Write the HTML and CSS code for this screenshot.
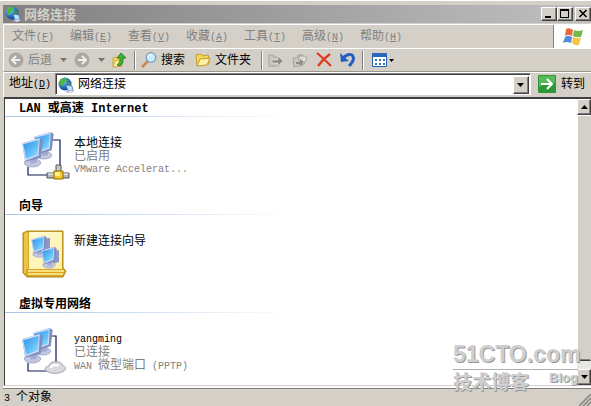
FILE: index.html
```html
<!DOCTYPE html>
<html lang="zh-CN">
<head>
    <meta charset="UTF-8">
    <meta name="viewport" content="width=device-width, initial-scale=1.0">
    <title>网络连接</title>
    <link rel="stylesheet" href="styles.css">
</head>

<body>
    <!-- shared drawings -->
    <svg class="defs" width="0" height="0">
        <defs>
            <radialGradient id="globeFill" cx="35%" cy="30%" r="75%">
                <stop offset="0" stop-color="#9fdcf5"/>
                <stop offset="0.5" stop-color="#2f7fd0"/>
                <stop offset="1" stop-color="#123c86"/>
            </radialGradient>
            <linearGradient id="screenFill" x1="0" y1="0" x2="1" y2="1">
                <stop offset="0" stop-color="#2f8fe8"/>
                <stop offset="0.6" stop-color="#62c0f8"/>
                <stop offset="1" stop-color="#a8e6ff"/>
            </linearGradient>
            <linearGradient id="bookFill" x1="0" y1="0" x2="1" y2="1">
                <stop offset="0" stop-color="#fffbd6"/>
                <stop offset="1" stop-color="#fdf0a4"/>
            </linearGradient>
            <symbol id="globe" viewBox="0 0 16 16">
                <circle cx="7" cy="7" r="6.5" fill="url(#globeFill)"/>
                <path d="M2 3 Q5 0 8 1 L9 4 L6 6 L5 9 L2 8 Z" fill="#52b443"/>
                <path d="M9 6 L12 5 L13 8 L10 10 Z" fill="#3c9a3c"/>
                <path d="M8 8 L14 9 L15 13 L10 14 Z" fill="#b9e4fb" stroke="#4d78b5" stroke-width="0.8"/>
                <path d="M8 15 L13 13 L16 14 L12 16 Z" fill="#e6ebf5" stroke="#8492b0" stroke-width="0.5"/>
            </symbol>
            <symbol id="monitor" viewBox="0 0 22 30">
                <ellipse cx="11" cy="25" rx="8" ry="4" fill="#c3c8e2" stroke="#9299bd" stroke-width="0.7"/>
                <path d="M9 19 L16 18 L15 25 L9 26 Z" fill="#a4abd0"/>
                <path d="M1 6 L18 1 L21 3 L19 20 L4 24 Z" fill="#7d8fc0"/>
                <path d="M1 6 L18 1 L17 18 L4 23 Z" fill="#cfdcf6"/>
                <path d="M2 7 L17 3 L16 17 L5 21 Z" fill="url(#screenFill)"/>
            </symbol>
        </defs>
    </svg>

    <div class="window">
        <header class="title-bar">
            <svg class="icon16"><use href="#globe"/></svg>
            <h1 class="title">网络连接</h1>
            <div class="title-buttons">
                <button class="title-btn" aria-label="最小化"><svg width="10" height="10"><path d="M1 7h6v2H1z"/></svg></button>
                <button class="title-btn" aria-label="最大化"><svg width="10" height="10"><path d="M0 0h9v9H0z M1 2v6h7V2z" fill-rule="evenodd"/></svg></button>
                <button class="title-btn close-btn" aria-label="关闭"><svg width="10" height="10"><path d="M1.500 1l7 7M8.500 1l-7 7" stroke="#000" stroke-width="1.600"/></svg></button>
            </div>
        </header>

        <div class="menu-row">
            <nav class="menu">
                <button class="menu-item">文件<span class="key">(<u>F</u>)</span></button>
                <button class="menu-item">编辑<span class="key">(<u>E</u>)</span></button>
                <button class="menu-item">查看<span class="key">(<u>V</u>)</span></button>
                <button class="menu-item">收藏<span class="key">(<u>A</u>)</span></button>
                <button class="menu-item">工具<span class="key">(<u>T</u>)</span></button>
                <button class="menu-item">高级<span class="key">(<u>N</u>)</span></button>
                <button class="menu-item">帮助<span class="key">(<u>H</u>)</span></button>
            </nav>
            <div class="flag">
                <svg width="20" height="18" viewBox="0 0 20 18">
                    <path d="M3 1 Q6 -1 10 2 L9 8 Q5 6 2 8 Z" fill="#e8693a"/>
                    <path d="M11 2 Q15 4 20 2 L18 9 Q14 10 10 8 Z" fill="#72b84a"/>
                    <path d="M2 9 Q5 7 9 9 L8 15 Q4 13 0 15 Z" fill="#5289d8"/>
                    <path d="M10 9 Q14 11 18 10 L16 17 Q12 18 9 15 Z" fill="#f6c544"/>
                </svg>
            </div>
        </div>

        <div class="toolbar">
            <button class="tool" disabled>
                <svg width="16" height="16"><circle cx="8" cy="8" r="7.500" fill="#aaa8a2"/><path d="M12 8H4M8 4L4 8l4 4" fill="none" stroke="#f2f0ea" stroke-width="2"/></svg>
                <span>后退</span>
            </button>
            <button class="tool arrow" aria-label="后退列表" disabled><svg width="7" height="4"><path d="M0 0h7L3.500 4z" fill="#77756f"/></svg></button>
            <button class="tool" aria-label="前进" disabled>
                <svg width="16" height="16"><circle cx="8" cy="8" r="7.500" fill="#aaa8a2"/><path d="M4 8h8M8 4l4 4-4 4" fill="none" stroke="#f2f0ea" stroke-width="2"/></svg>
            </button>
            <button class="tool arrow" aria-label="前进列表" disabled><svg width="7" height="4"><path d="M0 0h7L3.500 4z" fill="#77756f"/></svg></button>
            <button class="tool" aria-label="向上">
                <svg width="16" height="16"><path d="M1 6l4-1 1 1 4-1v9l-9 1z" fill="#f3d359" stroke="#c79d2c" stroke-width="0.800"/><path d="M1 15l2-6 8-1-2 6z" fill="#fff0a0" stroke="#c79d2c" stroke-width="0.700"/><path d="M5 13q4-3 3-7H5l4-5 5 5h-3q1 5-3 8z" fill="#3db33a" stroke="#1c7420" stroke-width="0.800"/></svg>
            </button>
            <span class="separator"></span>
            <button class="tool">
                <svg width="16" height="16"><path d="M1 15l6-6" stroke="#c98a61" stroke-width="3"/><circle cx="10" cy="5.500" r="4.800" fill="#c9ecfb" stroke="#6f9fc6" stroke-width="1.200"/><path d="M7 5q1-3 4-2" fill="none" stroke="#fff" stroke-width="1.200"/></svg>
                <span>搜索</span>
            </button>
            <button class="tool folders">
                <svg width="16" height="16"><path d="M1 3l5-1 2 2 5-1 1 3v6l-12 2z" fill="#f5d75c" stroke="#c79d2c"/><path d="M2 14l3-7 10-1-3 7z" fill="#fff1a2" stroke="#c59b2c"/></svg>
                <span>文件夹</span>
            </button>
            <span class="separator"></span>
            <button class="tool" aria-label="移动到" disabled>
                <svg width="16" height="16"><path d="M1 3h4l1 2h5v9H1z" fill="#c8c6c0" stroke="#a5a39d"/><path d="M4 8h6V4l5 5-5 5v-3H4z" fill="#8e8c87" stroke="#efede8" stroke-width="0.600"/></svg>
            </button>
            <button class="tool action" aria-label="复制到" disabled>
                <svg width="16" height="16"><path d="M1 6h4l1-3h4l1 3v7l-9 2z" fill="#c8c6c0" stroke="#a5a39d"/><path d="M7 4h6l2 2-3 6H7z" fill="#dddbd5" stroke="#a5a39d"/><path d="M4 10h4V7l4 3-4 4v-2H4z" fill="#8e8c87"/></svg>
            </button>
            <button class="tool action" aria-label="删除">
                <svg width="16" height="16"><path d="M1 1q6 5 14 13M14 2Q7 7 2 14" fill="none" stroke="#df3b1c" stroke-width="2.200"/></svg>
            </button>
            <button class="tool action" aria-label="撤消">
                <svg width="16" height="16"><path d="M3 6Q8 1 12 3q4 4-3 11" fill="none" stroke="#245fc0" stroke-width="3"/><path d="M0 1l1 9 8-1z" fill="#245fc0"/></svg>
            </button>
            <span class="separator"></span>
            <button class="tool views" aria-label="查看">
                <svg width="15" height="14"><path d="M0.500 0.500h14v13H0.500z" fill="#fff" stroke="#245eae"/><path d="M0 0h15v4H0z" fill="#2867bd"/><path d="M3 6h2v2H3zM7 6h2v2H7zM11 6h2v2h-2zM3 10h2v2H3zM7 10h2v2H7zM11 10h2v2h-2z" fill="#3974a8"/></svg>
                <svg width="5" height="3"><path d="M0 0h5L2.500 3z"/></svg>
            </button>
        </div>

        <div class="address-bar">
            <label class="address-label" for="address">地址<span class="key">(<u>D</u>)</span></label>
            <div class="address-box">
                <svg class="icon16"><use href="#globe"/></svg>
                <input type="text" id="address" value="网络连接">
                <button class="drop-btn" aria-label="地址列表"><svg width="7" height="4"><path d="M0 0h7L3.500 4z"/></svg></button>
            </div>
            <button class="go-btn">
                <svg width="18" height="18"><rect width="18" height="18" rx="1" fill="#2d9838"/><path d="M1 1h16v7Q8 7 1 12z" fill="#57b95a"/><path d="M3 9h11M9 4l5 5-5 5" fill="none" stroke="#fff" stroke-width="2"/></svg>
                <span>转到</span>
            </button>
        </div>

        <div class="content">
            <main class="list">
                <section class="group">
                    <h2 class="group-title"><span class="latin">LAN </span>或高速<span class="latin"> Internet</span></h2>
                    <div class="connection">
                        <svg class="icon48" viewBox="0 0 48 48">
                            <path d="M28 8h10v25M6 35v8h20" fill="none" stroke="#101858" stroke-width="1.200"/>
                            <use href="#monitor" x="11" y="-1" width="22" height="29"/>
                            <use href="#monitor" x="-1" y="5" width="23" height="31"/>
                            <path d="M25 41h22v5H25z" fill="#b9b9b9" stroke="#555"/>
                            <path d="M34 33h5v7h-5z" fill="#c9c9c9" stroke="#555"/>
                            <path d="M26 42h20" stroke="#fff"/>
                            <path d="M32 39h9v8h-9z" fill="#f2c928" stroke="#8e6a10"/>
                            <path d="M33 40h5v4h-5z" fill="#fff194"/>
                        </svg>
                        <div class="info">
                            <div class="name">本地连接</div>
                            <div class="detail">已启用</div>
                            <div class="detail latin">VMware Accelerat...</div>
                        </div>
                    </div>
                </section>
                <section class="group">
                    <h2 class="group-title">向导</h2>
                    <div class="connection">
                        <svg class="icon48" viewBox="0 0 48 48">
                            <path d="M1 3l4-2h36v37l3 3-3 6H5l-4-4z" fill="#d9a81e" stroke="#a98420"/>
                            <path d="M7 2h33v37H7z" fill="url(#bookFill)"/>
                            <path d="M3 3v40M5 2v37" stroke="#f7d968" stroke-width="1.200"/>
                            <path d="M6 41h36M6 44h35" stroke="#fff0a4" stroke-width="1.500"/>
                            <path d="M21 9l7-1v12l-7 2z" fill="#8e97c4"/>
                            <path d="M31 21l6-1v12l-6 2z" fill="#8e97c4"/>
                            <use href="#monitor" x="8" y="5" width="18" height="23"/>
                            <use href="#monitor" x="18" y="16" width="18" height="23"/>
                        </svg>
                        <div class="info">
                            <div class="name">新建连接向导</div>
                        </div>
                    </div>
                </section>
                <section class="group">
                    <h2 class="group-title">虚拟专用网络</h2>
                    <div class="connection">
                        <svg class="icon48" viewBox="0 0 48 48">
                            <path d="M26 8h8v28M6 35v8h20" fill="none" stroke="#101858" stroke-width="1.200"/>
                            <use href="#monitor" x="10" y="-1" width="22" height="29"/>
                            <use href="#monitor" x="-1" y="5" width="23" height="31"/>
                            <path d="M24 43q-3-4 3-5 1-5 7-4 5-1 6 3 6 2 2 6-9 5-18 0z" fill="#d9dade" stroke="#9a9ca3" stroke-width="0.800"/>
                            <path d="M28 40q4-5 9-2" fill="none" stroke="#fff" stroke-width="2"/>
                        </svg>
                        <div class="info">
                            <div class="name latin">yangming</div>
                            <div class="detail">已连接</div>
                            <div class="detail"><span class="latin">WAN </span>微型端口<span class="latin"> (PPTP)</span></div>
                        </div>
                    </div>
                </section>
            </main>
            <div class="scrollbar">
                <button class="scroll-btn" aria-label="向上滚动"><svg width="7" height="4"><path d="M0 4h7L3.500 0z"/></svg></button>
                <div class="thumb"></div>
                <div class="track"></div>
                <button class="scroll-btn" aria-label="向下滚动"><svg width="7" height="4"><path d="M0 0h7L3.500 4z"/></svg></button>
            </div>
        </div>

        <footer class="status-bar">
            <span><span class="latin">3 </span>个对象</span>
            <svg width="12" height="12"><path d="M0 12L12 0M4 12l8-8M8 12l4-4" stroke="#85827b" stroke-width="1.500"/></svg>
        </footer>

        <div class="watermark">
            <div class="mark-site">51CTO.com</div>
            <div class="mark-row"><span>技术博客</span><span class="mark-blog">Blog</span></div>
        </div>
    </div>
</body>
</html>
```

FILE: styles.css
```css
/* Classic Windows explorer window */
* {
    box-sizing: border-box;
}

body {
    margin: 0;
    background: #d4d0c8;
    color: #000;
    font-family: "Liberation Sans", "Noto Sans CJK SC", sans-serif;
    font-size: 12px;
    line-height: 13px;
}

button,
input {
    margin: 0;
    padding: 0;
    border: 0;
    background: none;
    color: inherit;
    font: inherit;
}

svg {
    display: block;
    flex-shrink: 0;
}

.defs {
    position: absolute;
}

.window {
    position: relative;
    display: flex;
    flex-direction: column;
    height: 100vh;
    padding: 4px 0 0 3px;
    border-top: 1px solid #fff;
}

.icon16 {
    width: 16px;
    height: 16px;
}

.latin,
.key {
    font-family: "Liberation Mono", monospace;
    font-size: 10px;
    white-space: pre;
}

/* Title bar */
.title-bar {
    display: flex;
    align-items: center;
    height: 18px;
    flex-shrink: 0;
    padding-left: 2px;
    background: linear-gradient(to right, #808080, #c0c0c0);
    color: #d4d0c8;
}

.title {
    flex: 1;
    margin: 0 0 0 3px;
    font-size: 13px;
    font-weight: bold;
}

.title-buttons {
    display: flex;
}

.title-btn,
.drop-btn,
.scroll-btn {
    display: flex;
    align-items: center;
    justify-content: center;
    width: 16px;
    height: 14px;
    background: #d4d0c8;
    border: 1px solid;
    border-color: #fff #404040 #404040 #fff;
    box-shadow: inset -1px -1px #808080;
}

.close-btn {
    margin-left: 2px;
}

/* Menu */
.menu-row {
    display: flex;
    height: 25px;
    flex-shrink: 0;
    margin-top: 1px;
    border: 1px solid #fff;
    border-right: 0;
    color: #808080;
}

.menu {
    display: flex;
    flex: 1;
    align-items: center;
    gap: 16px;
    padding-left: 8px;
    border-right: 1px solid #808080;
}

.menu-item {
    width: 42px;
    white-space: nowrap;
}

.flag {
    display: flex;
    align-items: center;
    justify-content: center;
    width: 37px;
    background: #fff;
}

/* Toolbar */
.toolbar {
    display: flex;
    align-items: center;
    height: 23px;
    flex-shrink: 0;
    padding-left: 4px;
    border-bottom: 1px solid #9a978f;
    border-left: 1px solid #fff;
}

.tool {
    display: flex;
    align-items: center;
    gap: 4px;
}

.tool:disabled {
    color: #808080;
}

.arrow {
    margin: 0 7px 0 8px;
}

.separator {
    width: 2px;
    height: 19px;
    margin: 0 5px 0 6px;
    border-left: 1px solid #808080;
    border-right: 1px solid #fff;
}

.folders {
    margin: 0 4px 0 10px;
}

.action {
    margin-left: 8px;
}

.views {
    margin-left: 3px;
    gap: 2px;
}

/* Address */
.address-bar {
    display: flex;
    align-items: center;
    height: 25px;
    flex-shrink: 0;
    padding: 0 0 2px 5px;
    border-top: 1px solid #fff;
    border-left: 1px solid #fff;
}

.address-label {
    width: 46px;
    white-space: nowrap;
}

.address-box {
    display: flex;
    flex: 1;
    align-items: center;
    height: 22px;
    padding: 1px 1px 0 2px;
    background: #fff;
    border: 1px solid;
    border-color: #808080 #fff #fff #808080;
    box-shadow: inset 1px 1px #404040;
}

.address-box input {
    flex: 1;
    min-width: 0;
    margin-left: 4px;
    outline: none;
}

.drop-btn {
    height: 18px;
}

.go-btn {
    display: flex;
    align-items: center;
    gap: 5px;
    margin: 0 6px 0 7px;
}

/* Connections */
.content {
    display: flex;
    flex: 1;
    min-height: 0;
    margin-left: 1px;
    background: #fff;
    border-top: 2px solid #404040;
    border-left: 1px solid #404040;
    border-bottom: 1px solid #d4d0c8;
}

.list {
    flex: 1;
    overflow: hidden;
}

.group {
    height: 98px;
}

.group-title {
    height: 18px;
    width: 290px;
    margin: 0;
    padding: 2px 0 0 14px;
    font-size: 12px;
    line-height: 14px;
    border-bottom: 1px solid;
    border-image: linear-gradient(to right, #a9c4e6, #fff) 1;
}

.group-title .latin {
    font-size: 12px;
}

.connection {
    display: flex;
    gap: 4px;
    padding: 15px 0 0 17px;
}

.icon48 {
    width: 48px;
    height: 48px;
}

.info {
    padding-top: 5px;
}

.detail {
    color: #808080;
}

/* Scrollbar */
.scrollbar {
    display: flex;
    flex-direction: column;
    width: 14px;
    background: #d4d0c8;
}

.scroll-btn {
    width: 14px;
    height: 16px;
    flex-shrink: 0;
}

.thumb {
    flex: 1;
    border: 1px solid;
    border-color: #fff #d4d0c8 #404040 #fff;
    box-shadow: inset 0 -1px #808080;
}

.track {
    height: 8px;
    background: #eae8e3;
}

/* Status */
.status-bar {
    display: flex;
    align-items: center;
    justify-content: space-between;
    height: 20px;
    flex-shrink: 0;
    padding: 1px 0 0 1px;
    border-top: 2px solid #fff;
    box-shadow: inset 0 1px #808080;
}

.status-bar svg {
    align-self: flex-end;
}

/* Site mark over the corner */
.watermark {
    position: absolute;
    right: 13px;
    bottom: 11px;
    width: 125px;
    color: #cfcfcf;
    font-weight: bold;
    text-shadow: 1px 1px #999;
}

.mark-site {
    font-size: 23px;
    line-height: 29px;
    border-bottom: 1px solid #b0b0b0;
}

.mark-row {
    display: flex;
    justify-content: space-between;
    font-size: 19px;
    line-height: 25px;
}

.mark-blog {
    font-size: 13px;
    line-height: 16px;
}
```
